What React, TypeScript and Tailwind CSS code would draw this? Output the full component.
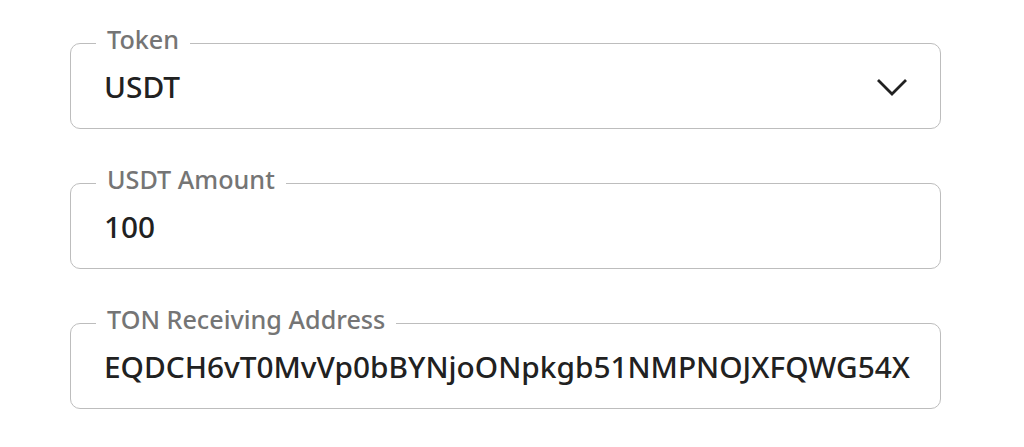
import React from "react";

const fields = [
  { label: "Token", value: "USDT", select: true },
  { label: "USDT Amount", value: "100" },
  { label: "TON Receiving Address", value: "EQDCH6vT0MvVp0bBYNjoONpkgb51NMPNOJXFQWG54X" },
];

const Field = ({ label, value, select }: { label: string; value: string; select?: boolean }) => (
  <div className="relative flex h-[86px] w-[871px] items-center rounded-[10px] border border-[#bdbdbd] pl-[33px] pr-[32px]">
    <span className="absolute -top-[17px] left-[25px] bg-white px-[11px] text-[25.2px] font-medium leading-none text-[#757575]">
      {label}
    </span>
    <span className="flex-1 pt-[1px] text-[29.8px] font-medium leading-none text-[#212121]">{value}</span>
    {select && (
      <svg width="32" height="20" viewBox="0 0 32 20">
        <polyline points="2,4 16,18 30,4" fill="none" stroke="#212121" strokeWidth="2.8" />
      </svg>
    )}
  </div>
);

export default function App() {
  return (
    <div className="min-h-screen bg-white pl-[70px] pt-[43px] font-['Noto_Sans',sans-serif]">
      <div className="flex flex-col gap-[54px]">
        {fields.map((f) => (
          <Field key={f.label} {...f} />
        ))}
      </div>
    </div>
  );
}
